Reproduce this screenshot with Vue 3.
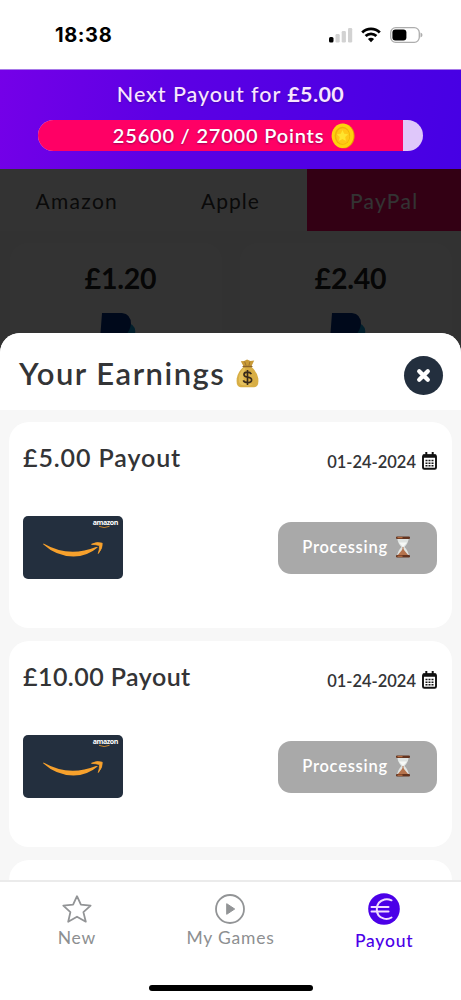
<script setup>
const tabs = [
  { name: 'Amazon', cls: 'amazon' },
  { name: 'Apple', cls: 'apple' },
  { name: 'PayPal', cls: 'paypal' },
]
const offers = ['£1.20', '£2.40']
const payouts = [
  { id: 1, title: '£5.00 Payout', cls: 'five', date: '01-24-2024' },
  { id: 2, title: '£10.00 Payout', cls: 'ten', date: '01-24-2024' },
]
const points = { current: 25600, goal: 27000 }
const progress = (points.current / points.goal) * 100
</script>

<template>
  <div class="phone">
    <header class="status">
      <span class="time">18:38</span>
      <svg class="signal" viewBox="0 0 24 16">
        <rect x="0" y="10" width="4.5" height="5.5" rx="1.5" fill="#000" />
        <rect x="6.5" y="7" width="4.2" height="8.5" rx="1.2" fill="#d2d2d2" />
        <rect x="12.7" y="4" width="4.2" height="11.5" rx="1.2" fill="#d2d2d2" />
        <rect x="19" y="1" width="4.2" height="14.5" rx="1.2" fill="#d2d2d2" />
      </svg>
      <svg class="wifi" viewBox="0 0 20 16" fill="none" stroke="#000" stroke-width="2.8">
        <path d="M1.2 5.4a12.6 12.6 0 0 1 17.6 0" />
        <path d="M4.6 9a7.8 7.8 0 0 1 10.8 0" />
        <path d="M10 15.2 6.9 12.1a4.5 4.5 0 0 1 6.2 0z" fill="#000" stroke="none" />
      </svg>
      <svg class="battery" viewBox="0 0 33 16">
        <rect x=".7" y=".7" width="28.6" height="14.6" rx="5" fill="#fff" stroke="#adadad" stroke-width="1.3" />
        <rect x="2.4" y="2.6" width="14" height="10.8" rx="3" fill="#000" />
        <path d="M30.5 5.5q2 .8 2 2.5t-2 2.5z" fill="#adadad" />
      </svg>
    </header>

    <section class="banner">
      <p class="next">Next Payout for <b>£5.00</b></p>
      <div class="bar">
        <div class="fill" :style="{ width: progress + '%' }"></div>
        <div class="bar-label">
          <span>{{ points.current }} / {{ points.goal }} Points</span>
          <svg class="coin" viewBox="0 0 24 26">
            <ellipse cx="12.6" cy="13" rx="11" ry="12.3" fill="#e79b00" />
            <ellipse cx="11.6" cy="12.8" rx="11" ry="12.2" fill="#ffd20c" />
            <ellipse cx="11.4" cy="12.8" rx="7.8" ry="9" fill="#f2b00b" />
            <ellipse cx="11.8" cy="13.2" rx="6.6" ry="7.9" fill="#ffc816" />
            <path d="m11.5 7 1.7 3.8 4 .5-3 2.8.7 4-3.4-2-3.6 2 .8-4-2.9-2.8 4-.5z" fill="#ffe42e" />
          </svg>
        </div>
      </div>
    </section>

    <main class="stage">
      <nav class="tabs">
        <div v-for="t in tabs" :key="t.name" class="tab" :class="t.cls"><span>{{ t.name }}</span></div>
      </nav>
      <div class="offers">
        <div v-for="o in offers" :key="o" class="offer">
          <span class="price">{{ o }}</span>
          <svg class="pp" viewBox="0 0 38 44">
            <path d="M30 10q8 3 6 13t-14 12l-2 8H8z" fill="#0a9bd8" />
            <path d="M3 0h20q9 1 9 11-2 14-17 15H9L7 40H0z" fill="#003087" />
          </svg>
        </div>
      </div>
      <div class="shade"></div>

      <section class="sheet">
        <div class="sheet-head">
          <h1>Your Earnings</h1>
          <svg class="bag" viewBox="0 0 24 30">
            <path d="M5 2.2 8.5 2l3-1.600L15 2l4-.6-3 6.400H8z" fill="#c99b38" />
            <path d="M8 8q-6 5-7.200 12Q-.3 29 5 29.400h14q5.300-.4 4.200-9.400Q22 13 16 8z" fill="#d8ae45" />
            <path d="M8 9q-4.500 5-5 11t3 7q7 1 12-.5Q12 26 9 23t1-14z" fill="#edcb68" opacity=".65" />
            <path d="M7.500 7.800h9" stroke="#8c642a" stroke-width="1.600" stroke-linecap="round" />
            <path d="m9 2.600 1.500 4m4-4-1 4" stroke="#91682a" stroke-width=".8" />
            <path d="M16 15.700q-1-2.100-4-2.100-3.700 0-3.700 2.500 0 2.200 3.700 2.700 4.300.5 4.300 3 0 2.700-4.300 2.700-3.400 0-4.400-2.300M12 11.300v15.600" fill="none" stroke="#392b1b" stroke-width="1.700" />
          </svg>
          <button class="close" aria-label="Close">
            <svg viewBox="0 0 14 14"><path d="m3 3 8 8m0-8-8 8" stroke="#fff" stroke-width="4" stroke-linecap="round" /></svg>
          </button>
        </div>

        <div class="list">
          <article v-for="p in payouts" :key="p.id" class="card">
            <div class="card-top">
              <h2 :class="p.cls">{{ p.title }}</h2>
              <span class="date">{{ p.date }}</span>
              <svg class="cal" viewBox="0 0 15 18">
                <rect x="1" y="3.200" width="13" height="13.600" rx="1.300" fill="#fff" stroke="#111" stroke-width="1.900" />
                <path d="M1 2.600h13v3.200H1zM3.300 0h2v4h-2zM9.700 0h2v4h-2z" fill="#111" />
                <path d="M3.500 8.600h8M3.500 11.200h8M3.500 13.700h8" stroke="#171717" stroke-width="1.500" stroke-dasharray="2 1" />
              </svg>
            </div>
            <div class="card-body">
              <div class="gift">
                <span class="brand">amazon</span>
                <svg class="smile" viewBox="0 0 100 63">
                  <path d="M20.500 27.500q25 14.500 52.500 3.500l2 .2q-11 9.300-24.500 9.300-17 0-30.400-12.200z" fill="#f7a12c" />
                  <path d="M68.500 28.300q5-3 10.700-1.100.6 5-3.900 10.300 1.500-4.200 1.200-8-3.600-1-8-1.200z" fill="#f7a12c" stroke="#f7a12c" stroke-width=".8" />
                  <path d="M76 10.300q5 2.600 10.500 0" fill="none" stroke="#c5822a" stroke-width="1" />
                </svg>
              </div>
              <button class="processing">
                <span>Processing</span>
                <svg class="glass" viewBox="0 0 16 22">
                  <path d="M2.200 2h11.600q-.4 5-4.300 9 3.900 4 4.300 9H2.200q.4-5 4.300-9-3.900-4-4.300-9z" fill="#e0e4e2" />
                  <path d="M4 6.600h8L8 11z" fill="#f7f9f7" />
                  <path d="m8 12.700 5.300 6.500H2.700z" fill="#b5734d" />
                  <path d="M8 11v4" stroke="#b5734d" />
                  <rect x="1" y=".5" width="14" height="2.600" rx="1" fill="#633420" />
                  <rect x="1" y="19" width="14" height="2.600" rx="1" fill="#633420" />
                  <path d="M2.500 1.700h5M2.500 20.200h5" stroke="#ce7c48" />
                </svg>
              </button>
            </div>
          </article>
          <article class="card"></article>
        </div>
      </section>
    </main>

    <footer class="bottom">
      <div class="nav">
        <div class="item">
          <svg class="ico" viewBox="0 0 32 32"><path d="m16 3.200 3.900 8.500 9.700 1-7.200 6.400 2.400 9.600-8.800-5-8.800 5 2.200-9.600-7.100-6.400 9.800-1z" fill="none" stroke="#929496" stroke-width="1.800" stroke-linejoin="round" /></svg>
          <span class="n-new">New</span>
        </div>
        <div class="item">
          <svg class="ico" viewBox="0 0 32 32"><circle cx="16" cy="16" r="14" fill="none" stroke="#929496" stroke-width="1.800" /><path d="m12.700 10.700 8 5.300-8 5.300z" fill="#929496" stroke="#929496" stroke-linejoin="round" /></svg>
          <span class="n-games">My Games</span>
        </div>
        <div class="item active">
          <svg class="ico" viewBox="0 0 32 32"><circle cx="16" cy="16" r="15.800" fill="#4b00e8" /><path d="M23.500 7.300Q20 5.700 16.500 6.500 9 8.300 8.800 16T16 25.600q4 1 7.500-1.100M3.500 14h17M3.500 18.400h17" fill="none" stroke="#f2ddff" stroke-width="2" stroke-linecap="round" /></svg>
          <span class="n-payout">Payout</span>
        </div>
      </div>
      <div class="home"></div>
    </footer>
  </div>
</template>

<style>
body { margin: 0; background: #fff; }
</style>

<style scoped>
* { box-sizing: border-box; }
.phone { width: 461px; height: 1000px; display: flex; flex-direction: column; overflow: hidden; background: #fff; font-family: Lato, "Noto Sans", sans-serif; color: #333436; }
p, h1, h2 { margin: 0; }
svg { display: block; flex: none; }
button { border: 0; padding: 0; font: inherit; }
span, h1, h2, p { white-space: nowrap; }

.status { height: 69px; display: flex; align-items: center; padding: 0 38px 0 55px; flex: none; }
.time { font: 700 20px/24px Inter, sans-serif; color: #000; letter-spacing: .6px; margin-right: auto; }
.signal { width: 24px; height: 16px; margin-right: 8px; }
.wifi { width: 20px; height: 16px; margin-right: 9px; }
.battery { width: 33px; height: 16px; }

.banner { height: 100px; flex: none; background: linear-gradient(100deg, #7500e8 0%, #5d00e4 35%, #4600e4 100%); display: flex; flex-direction: column; align-items: center; padding-top: 10px; border-top: 1px solid #a779e8; }
.next { font-size: 21.500px; line-height: 28px; font-weight: 500; color: #f8e5ff; letter-spacing: .95px; text-shadow: 0 1px 2px #25006a66; }
.next b { font-weight: 700; letter-spacing: .4px; }
.bar { position: relative; margin-top: 12px; width: 385px; height: 31px; border-radius: 16px; background: #dfc7fa; overflow: hidden; }
.fill { height: 100%; background: #ff0065; }
.bar-label { position: absolute; inset: 0; display: flex; align-items: center; justify-content: center; gap: 7px; padding: 0 0 2px 7px; color: #fff; font-size: 20px; font-weight: 600; letter-spacing: .8px; text-shadow: 0 1px 2px #69004baa; }
.coin { width: 24px; height: 26px; margin-top: 2px; }

.stage { position: relative; flex: 1; min-height: 0; overflow: hidden; background: #f7f7f7; }
.tabs { display: grid; grid-template-columns: repeat(3, 1fr); height: 62px; background: #fff; }
.tab { display: flex; align-items: center; justify-content: center; font-size: 21px; letter-spacing: 1px; color: #333; }
.amazon { letter-spacing: 1.3px; }
.paypal { background: #ff0065; color: #fff; letter-spacing: 1.3px; }
.offers { display: grid; grid-template-columns: 212px 212px; gap: 18px; padding: 12px 10px; }
.offer { height: 200px; border-radius: 18px; background: #fff; display: flex; flex-direction: column; align-items: center; padding-top: 17px; }
.price { font-size: 28.500px; line-height: 36px; font-weight: 700; letter-spacing: -.2px; color: #222; padding-left: 9px; }
.pp { width: 38px; height: 44px; margin: 17px 0 0 4px; }
.shade { position: absolute; inset: 0; background: rgba(0, 0, 0, .8); }

.sheet { position: absolute; left: 0; right: 0; top: 164px; bottom: 0; background: #f7f7f7; border-radius: 20px 20px 0 0; overflow: hidden; }
.sheet-head { height: 77px; display: flex; align-items: center; background: #fff; padding: 8px 18px 0 19px; }
h1 { font-size: 31px; font-weight: 600; letter-spacing: 1.500px; line-height: 36px; padding-bottom: 6px; }
.bag { width: 23px; height: 29px; margin: 0 auto 4px 11px; }
.close { width: 39px; height: 39px; border-radius: 50%; background: #232f3e; display: grid; place-items: center; }
.close svg { width: 15px; height: 15px; }
.list { padding: 12px 9px; display: flex; flex-direction: column; gap: 13px; }
.card { height: 206px; flex: none; background: #fff; border-radius: 20px; padding: 20px 15px 0 14px; }
.card-top { display: flex; align-items: center; height: 32px; }
h2 { font-size: 25px; line-height: 32px; font-weight: 600; letter-spacing: .9px; margin-right: auto; padding-bottom: 3px; }
.ten { letter-spacing: .45px; }
.date { font-size: 16.500px; line-height: 20px; font-weight: 600; letter-spacing: 0; margin: 8px 6px 0 0; }
.cal { width: 15px; height: 18px; margin-top: 6px; }
.card-body { display: flex; justify-content: space-between; align-items: center; height: 63px; margin-top: 42px; }
.gift { position: relative; width: 100px; height: 63px; border-radius: 5px; background: #232f3e; }
.brand { position: absolute; top: 2px; right: 5px; font: 700 7px/9px "Open Sans", sans-serif; color: #fff; letter-spacing: -.4px; }
.smile { width: 100px; height: 63px; }
.processing { width: 159px; height: 52px; border-radius: 13px; background: #a9a9a9; color: #fff; display: flex; align-items: center; justify-content: center; gap: 7px; padding: 0 2px 2px 0; font-size: 16.500px; font-weight: 600; letter-spacing: .75px; }
.glass { width: 16px; height: 22px; }

.bottom { height: 120px; flex: none; border-top: 2px solid #ebebeb; background: #fff; }
.nav { display: grid; grid-template-columns: repeat(3, 1fr); height: 103px; }
.item { display: flex; flex-direction: column; align-items: center; padding-top: 11px; color: #8d8f91; font-size: 17.500px; line-height: 22px; letter-spacing: .8px; }
.ico { width: 32px; height: 32px; margin-bottom: 2px; }
.item.active { color: #4b00e8; font-weight: 500; }
.active .ico { margin-bottom: 5px; }
.home { width: 164px; height: 6px; border-radius: 3px; background: #000; margin: 0 auto; }
</style>
